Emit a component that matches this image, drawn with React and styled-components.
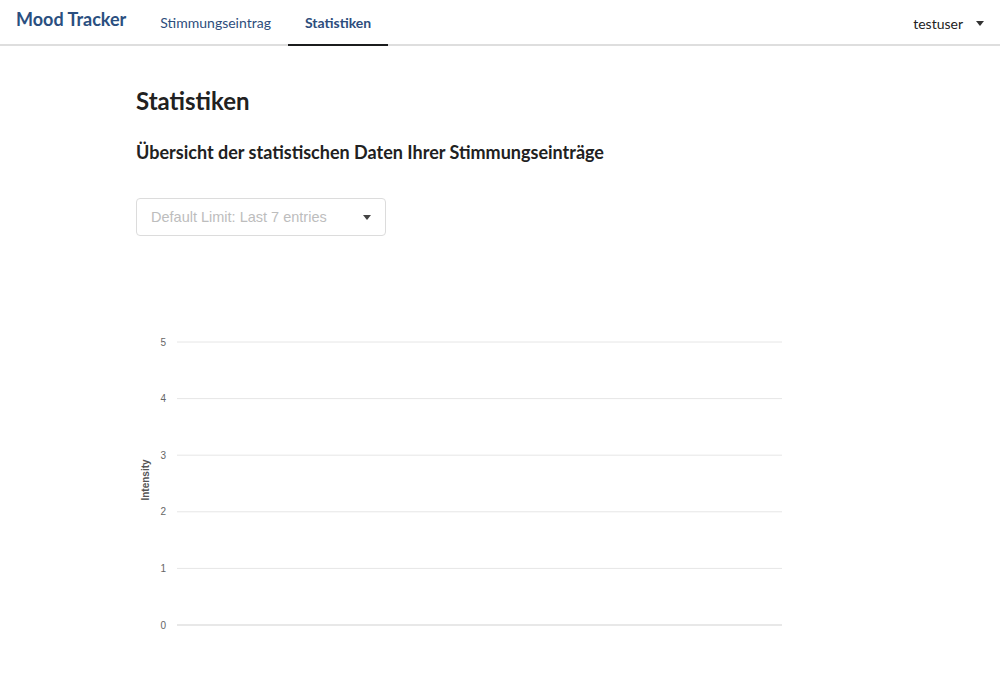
import React from "react";
import styled, { createGlobalStyle } from "styled-components";

const GlobalStyle = createGlobalStyle`
  html, body {
    margin: 0;
    padding: 0;
    background: #ffffff;
    font-family: Lato, "Helvetica Neue", Arial, sans-serif;
    color: #212121;
  }
`;

const TopBar = styled.div`
  display: flex;
  align-items: stretch;
  height: 44px;
  border-bottom: 2px solid #dedede;
  padding: 0 16px;
`;

const Brand = styled.div`
  display: flex;
  align-items: center;
  padding-bottom: 6px;
  font-size: 18px;
  font-weight: 700;
  color: #2a4f80;
  margin-right: 17px;
`;

const Tab = styled.div`
  display: flex;
  align-items: center;
  padding: 0 17px;
  font-size: 14px;
  font-weight: ${(p) => (p.active ? 700 : 400)};
  color: #2d4d7c;
  border-bottom: 2px solid ${(p) => (p.active ? "#1b1c1d" : "transparent")};
  margin-bottom: -2px;
  cursor: pointer;
`;

const Spacer = styled.div`
  flex: 1;
`;

const UserMenu = styled.div`
  display: flex;
  align-items: center;
  gap: 13px;
  padding-top: 2px;
  font-size: 14px;
  color: #212121;
`;

const Caret = styled.span`
  width: 0;
  height: 0;
  border-left: 4px solid transparent;
  border-right: 4px solid transparent;
  border-top: 5px solid #333;
`;

const Main = styled.main`
  padding: 40px 136px 0;
`;

const Title = styled.h1`
  margin: 0;
  font-size: 24px;
  font-weight: 700;
  line-height: 30px;
  color: #212121;
`;

const Subtitle = styled.h2`
  margin: 24px 0 0;
  font-size: 18px;
  font-weight: 700;
  line-height: 24px;
  color: #212121;
`;

const Select = styled.div`
  margin-top: 34px;
  width: 250px;
  height: 38px;
  box-sizing: border-box;
  display: flex;
  align-items: center;
  justify-content: space-between;
  padding: 0 14px 0 14px;
  border: 1px solid #dcdcdc;
  border-radius: 4px;
  font-family: "Liberation Sans", Arial, sans-serif;
  font-size: 14.5px;
  color: #bdbdbd;
`;

const SelectCaret = styled(Caret)`
  border-top-color: #444;
`;

const ChartWrap = styled.div`
  margin-top: 20px;
  margin-left: -136px;
`;

const ticks = [5, 4, 3, 2, 1, 0];

function Chart() {
  const top = 86;
  const step = 56.6;
  return (
    <svg width="800" height="400" viewBox="0 0 800 400">
      {ticks.map((t, i) => {
        const y = top + i * step;
        return (
          <g key={t}>
            <line
              x1="177"
              x2="782"
              y1={y}
              y2={y}
              stroke={t === 0 ? "#e0e0e0" : "#e6e6e6"}
              strokeWidth={t === 0 ? 1.5 : 1}
            />
            <text
              x="166"
              y={y + 3.5}
              textAnchor="end"
              fontFamily="Liberation Sans, Arial, sans-serif"
              fontSize="10"
              fill="#666"
            >
              {t}
            </text>
          </g>
        );
      })}
      <text
        transform="translate(149 224) rotate(-90)"
        textAnchor="middle"
        fontFamily="Liberation Sans, Arial, sans-serif"
        fontSize="10"
        fontWeight="700"
        fill="#555"
      >
        Intensity
      </text>
    </svg>
  );
}

export default function App() {
  return (
    <>
      <GlobalStyle />
      <TopBar>
        <Brand>Mood Tracker</Brand>
        <Tab>Stimmungseintrag</Tab>
        <Tab active>Statistiken</Tab>
        <Spacer />
        <UserMenu>
          testuser
          <Caret />
        </UserMenu>
      </TopBar>
      <Main>
        <Title>Statistiken</Title>
        <Subtitle>Übersicht der statistischen Daten Ihrer Stimmungseinträge</Subtitle>
        <Select>
          Default Limit: Last 7 entries
          <SelectCaret />
        </Select>
        <ChartWrap>
          <Chart />
        </ChartWrap>
      </Main>
    </>
  );
}
